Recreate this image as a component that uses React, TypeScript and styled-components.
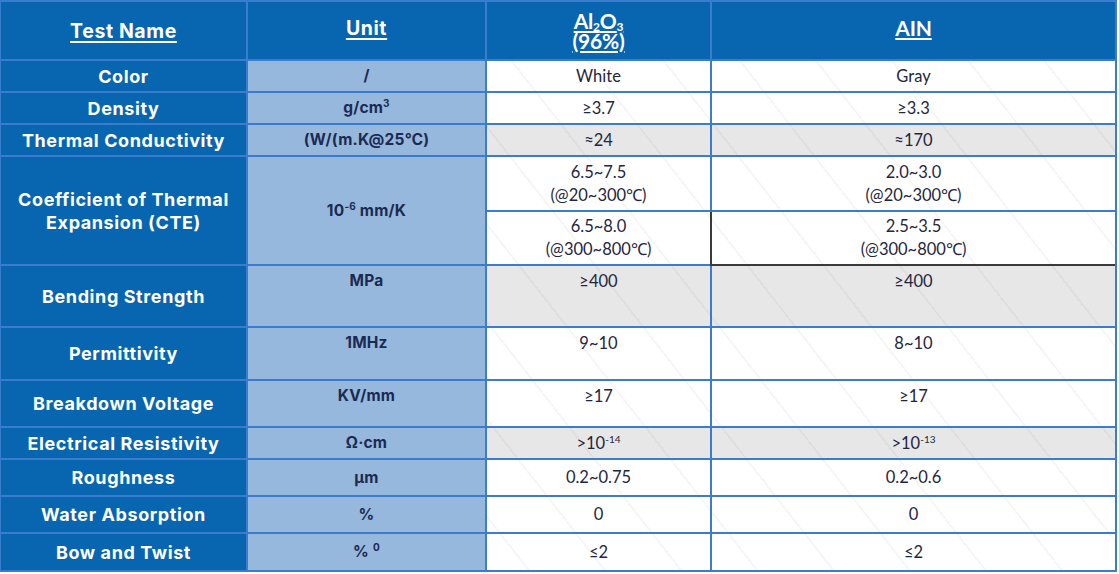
import React from "react";
import styled, { createGlobalStyle, css } from "styled-components";

const GlobalStyle = createGlobalStyle`
  html, body { margin: 0; padding: 0; background: #ffffff; }
  body { width: 1119px; height: 574px; overflow: hidden; }
`;

const BLUE = "#0865b0";
const LINE = "#3b7ccc";

const Table = styled.div`
  display: grid;
  grid-template-columns: 245px 237px 223px 403px;
  grid-template-rows: 57px 30px 30px 30px 53px 52px 60px 51px 45px 30px 35px 35px 36px;
  gap: 2px;
  padding: 2px 2px 2px 1px;
  width: max-content;
  background: ${LINE};
`;

const HeadCell = styled.div<{ $shift?: number }>`
  background: ${BLUE};
  color: #ffffff;
  display: flex;
  flex-direction: column;
  align-items: center;
  justify-content: center;
  padding-bottom: ${(p) => p.$shift ?? 0}px;
  box-sizing: border-box;
`;

const HeadLabel = styled.span`
  font-family: Inter, "Open Sans", sans-serif;
  font-weight: 700;
  font-size: 19.5px;
  text-decoration: underline;
  text-decoration-thickness: 2px;
  text-underline-offset: 3px;
  letter-spacing: 0.6px;
`;

const MatLabel = styled.span`
  display: block;
  font-family: Lato, "Open Sans", sans-serif;
  font-weight: 700;
  font-size: 21px;
  line-height: 20px;
  text-decoration: underline;
  text-decoration-thickness: 2px;
  text-underline-offset: 2px;
  letter-spacing: -0.2px;
  sub {
    font-size: 12px;
    vertical-align: -2px;
    line-height: 0;
  }
`;

const NameCell = styled.div`
  background: ${BLUE};
  color: #ffffff;
  display: flex;
  align-items: center;
  justify-content: center;
  text-align: center;
  font-family: Inter, "Open Sans", sans-serif;
  font-weight: 700;
  font-size: 18px;
  line-height: 23px;
  letter-spacing: 0.6px;
`;

const alignTop = css`
  align-items: flex-start;
  padding-top: 5px;
`;

const UnitCell = styled.div<{ $top?: boolean }>`
  background: #96b8dc;
  color: #1c2a52;
  display: flex;
  align-items: center;
  justify-content: center;
  box-sizing: border-box;
  font-family: Inter, "Open Sans", sans-serif;
  font-weight: 700;
  font-size: 15.5px;
  line-height: 20px;
  letter-spacing: 0.2px;
  ${(p) => p.$top && alignTop}
  sup {
    font-size: 10px;
    line-height: 0;
    vertical-align: 6px;
  }
`;

const ValueCell = styled.div<{ $shade?: boolean; $top?: boolean; $dark?: boolean }>`
  background-color: ${(p) => (p.$shade ? "#e7e7e7" : "#ffffff")};
  background-image: repeating-linear-gradient(
    52deg,
    transparent 0px,
    transparent 58px,
    rgba(0, 0, 0, 0.035) 58px,
    rgba(0, 0, 0, 0.035) 60px
  );
  background-attachment: fixed;
  color: #1f2640;
  display: flex;
  flex-direction: column;
  align-items: center;
  justify-content: center;
  box-sizing: border-box;
  text-align: center;
  font-family: Lato, "Open Sans", sans-serif;
  font-size: 16.5px;
  line-height: 23px;
  ${(p) =>
    p.$top &&
    css`
      justify-content: flex-start;
      padding-top: 4px;
    `}
  ${(p) =>
    p.$dark &&
    css`
      margin: 0 0 -2px -2px;
      border-left: 2px solid #3a3a3a;
      border-bottom: 2px solid #3a3a3a;
    `}
  sup {
    font-size: 10px;
    line-height: 0;
    vertical-align: 6px;
  }
`;

const SpanName = styled(NameCell)`
  grid-row: span 2;
`;

const SpanUnit = styled(UnitCell)`
  grid-row: span 2;
`;

type Row = {
  name: React.ReactNode;
  unit: React.ReactNode;
  a: React.ReactNode;
  b: React.ReactNode;
  shade?: boolean;
  top?: boolean;
};

const before: Row[] = [
  { name: "Color", unit: "/", a: "White", b: "Gray" },
  { name: "Density", unit: <>g/cm<sup>3</sup></>, a: "≥3.7", b: "≥3.3" },
  {
    name: "Thermal Conductivity",
    unit: "(W/(m.K@25℃)",
    a: "≈24",
    b: "≈170",
    shade: true,
  },
];

const after: Row[] = [
  { name: "Bending Strength", unit: "MPa", a: "≥400", b: "≥400", shade: true, top: true },
  { name: "Permittivity", unit: "1MHz", a: "9~10", b: "8~10", top: true },
  { name: "Breakdown Voltage", unit: "KV/mm", a: "≥17", b: "≥17", top: true },
  {
    name: "Electrical Resistivity",
    unit: "Ω·cm",
    a: <>&gt;10<sup>-14</sup></>,
    b: <>&gt;10<sup>-13</sup></>,
    shade: true,
  },
  { name: "Roughness", unit: "μm", a: "0.2~0.75", b: "0.2~0.6" },
  { name: "Water Absorption", unit: "%", a: "0", b: "0" },
  { name: "Bow and Twist", unit: <>% <sup>0</sup></>, a: "≤2", b: "≤2" },
];

const renderRow = (r: Row) => (
  <React.Fragment key={String(r.name)}>
    <NameCell>{r.name}</NameCell>
    <UnitCell $top={r.top}>
      <span>{r.unit}</span>
    </UnitCell>
    <ValueCell $shade={r.shade} $top={r.top}>
      <span>{r.a}</span>
    </ValueCell>
    <ValueCell $shade={r.shade} $top={r.top}>
      <span>{r.b}</span>
    </ValueCell>
  </React.Fragment>
);

export default function App() {
  return (
    <>
      <GlobalStyle />
      <Table>
        <HeadCell>
          <HeadLabel>Test Name</HeadLabel>
        </HeadCell>
        <HeadCell $shift={6}>
          <HeadLabel>Unit</HeadLabel>
        </HeadCell>
        <HeadCell>
          <MatLabel>
            Al<sub>2</sub>O<sub>3</sub>
          </MatLabel>
          <MatLabel>(96%)</MatLabel>
        </HeadCell>
        <HeadCell $shift={6}>
          <MatLabel>AIN</MatLabel>
        </HeadCell>

        {before.map(renderRow)}

        <SpanName>
          Coefficient of Thermal
          <br />
          Expansion (CTE)
        </SpanName>
        <SpanUnit>
          <span>
            10<sup>-6</sup> mm/K
          </span>
        </SpanUnit>
        <ValueCell>
          <span>6.5~7.5</span>
          <span>(@20~300℃)</span>
        </ValueCell>
        <ValueCell>
          <span>2.0~3.0</span>
          <span>(@20~300℃)</span>
        </ValueCell>
        <ValueCell>
          <span>6.5~8.0</span>
          <span>(@300~800℃)</span>
        </ValueCell>
        <ValueCell $dark>
          <span>2.5~3.5</span>
          <span>(@300~800℃)</span>
        </ValueCell>

        {after.map(renderRow)}
      </Table>
    </>
  );
}
